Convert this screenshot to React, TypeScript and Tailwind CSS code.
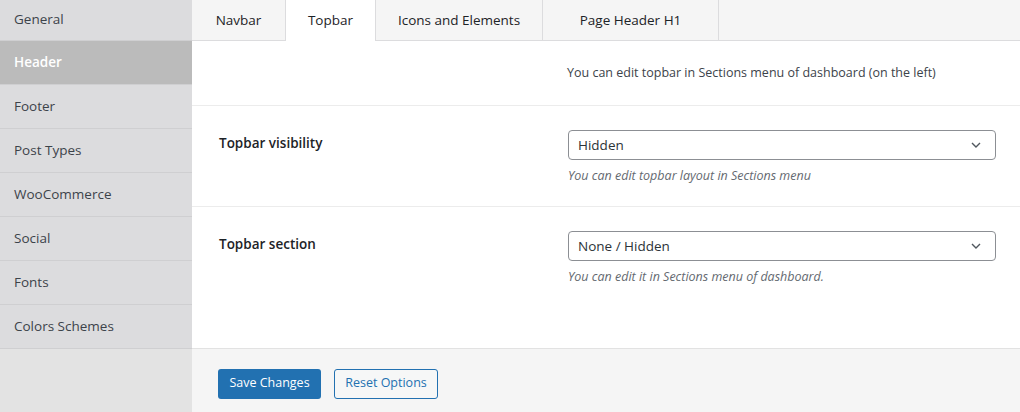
import React from 'react';

const sections = ['General', 'Header', 'Footer', 'Post Types', 'WooCommerce', 'Social', 'Fonts', 'Colors Schemes'];
const tabs = [
    { label: 'Navbar', w: 'w-[94px]' },
    { label: 'Topbar', w: 'w-[90px]' },
    { label: 'Icons and Elements', w: 'w-[167px]' },
    { label: 'Page Header H1', w: 'w-[176px]' },
];

const Chevron = () => (
    <svg width="14" height="14" viewBox="0 0 14 14" fill="none" className="text-[#50575e]">
        <path d="M3 5l4 4 4-4" stroke="currentColor" strokeWidth="1.4" />
    </svg>
);

const SelectBox = ({ value }: { value: string }) => (
    <div className="flex h-[30px] w-[428px] items-center justify-between rounded border border-[#8c8f94] bg-white pl-[9px] pr-[12px] text-[13.5px] text-[#2c3338]">
        <span>{value}</span>
        <Chevron />
    </div>
);

export default function App() {
    return (
        <div className="flex h-[412px] w-[1020px] overflow-hidden bg-white text-[14px] text-[#3c434a] [font-family:'Open_Sans',sans-serif]">
            {/* Sections sidebar */}
            <aside className="flex w-[192px] shrink-0 flex-col bg-[#e3e3e3]">
                {sections.map((s, i) => (
                    <div
                        key={s}
                        className={
                            'flex shrink-0 items-center border-b border-[#cfcfd1] px-[14px] text-[13.5px] ' +
                            (i === 0 ? 'h-[41px] pb-[2px] ' : 'h-[44px] ') +
                            (s === 'Header'
                                ? 'bg-[#bbbbbb] font-semibold text-white'
                                : 'bg-[#dcdcde] text-[#3c434a]')
                        }
                    >
                        {s}
                    </div>
                ))}
            </aside>

            <main className="flex min-w-0 flex-1 flex-col">
                {/* Tabs */}
                <div className="flex h-[41px] shrink-0 border-b border-[#dcdcde] bg-[#f5f5f5]">
                    {tabs.map((t) => (
                        <div
                            key={t.label}
                            className={
                                'flex items-center justify-center border-r border-[#dcdcde] text-[13.5px] text-[#1d2327] ' +
                                t.w +
                                (t.label === 'Topbar' ? ' relative -mb-px h-[41px] bg-white' : '')
                            }
                        >
                            {t.label}
                        </div>
                    ))}
                </div>

                <div className="flex flex-1 flex-col">
                    <div className="flex h-[65px] items-center border-b border-[#ececec] pl-[375px] text-[12.5px] text-[#3c434a]">
                        You can edit topbar in Sections menu of dashboard (on the left)
                    </div>

                    <div className="flex h-[101px] border-b border-[#ececec] px-[27px] pt-[24px]">
                        <div className="w-[349px] shrink-0 pt-[3px] text-[13.5px] font-semibold text-[#1d2327]">Topbar visibility</div>
                        <div className="flex flex-col">
                            <SelectBox value="Hidden" />
                            <p className="mt-[7px] text-[12.5px] italic text-[#646970]">You can edit topbar layout in Sections menu</p>
                        </div>
                    </div>

                    <div className="flex flex-1 px-[27px] pt-[24px]">
                        <div className="w-[349px] shrink-0 pt-[3px] text-[13.5px] font-semibold text-[#1d2327]">Topbar section</div>
                        <div className="flex flex-col">
                            <SelectBox value="None / Hidden" />
                            <p className="mt-[7px] text-[12.5px] italic text-[#646970]">You can edit it in Sections menu of dashboard.</p>
                        </div>
                    </div>
                </div>

                {/* Footer buttons */}
                <div className="flex h-[64px] shrink-0 items-center gap-[13px] border-t border-[#e2e2e2] bg-[#f5f5f5] pl-[26px] pt-[6px]">
                    <button className="h-[30px] w-[103px] rounded-[3px] bg-[#2271b1] text-[12.5px] text-white">Save Changes</button>
                    <button className="h-[30px] w-[104px] rounded-[3px] border border-[#2271b1] bg-[#f6f7f7] text-[12.5px] text-[#2271b1]">Reset Options</button>
                </div>
            </main>
        </div>
    );
}
